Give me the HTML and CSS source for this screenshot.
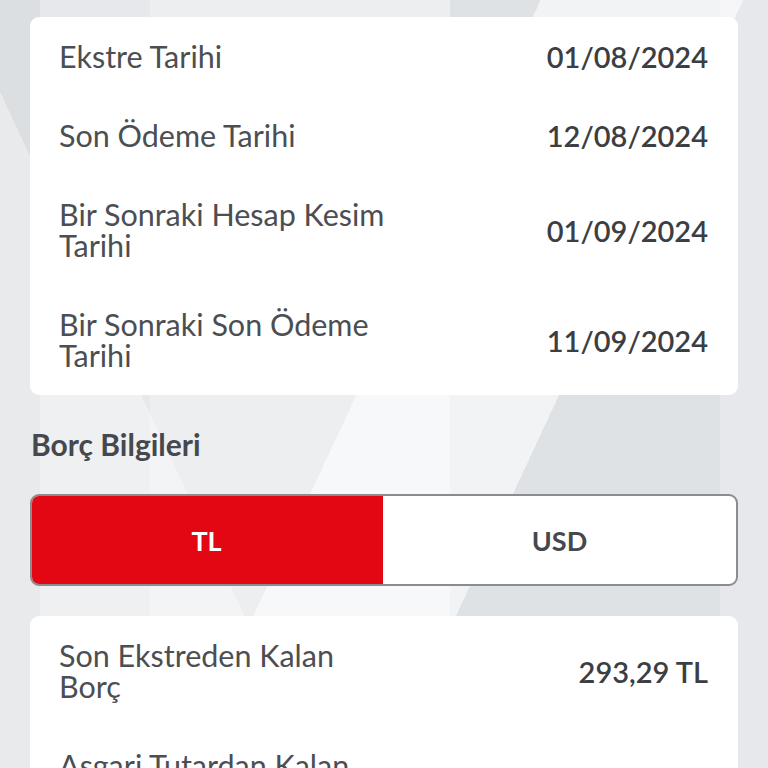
FILE: index.html
```html
<!DOCTYPE html>
<html lang="tr">
<head>
<meta charset="utf-8">
<link rel="stylesheet" href="styles.css">
</head>
<body>
<main class="page">
  <section class="card">
    <div class="row"><div class="label">Ekstre Tarihi</div><div class="value">01/08/2024</div></div>
    <div class="row"><div class="label">Son Ödeme Tarihi</div><div class="value">12/08/2024</div></div>
    <div class="row"><div class="label">Bir Sonraki Hesap Kesim Tarihi</div><div class="value">01/09/2024</div></div>
    <div class="row"><div class="label">Bir Sonraki Son Ödeme Tarihi</div><div class="value">11/09/2024</div></div>
  </section>

  <h2 class="section-title">Borç Bilgileri</h2>

  <div class="toggle">
    <button class="tab tab-active">TL</button>
    <button class="tab">USD</button>
  </div>

  <section class="card">
    <div class="row"><div class="label">Son Ekstreden Kalan Borç</div><div class="value">293,29 TL</div></div>
    <div class="row"><div class="label">Asgari Tutardan Kalan Borç</div><div class="value">0,00 TL</div></div>
  </section>
</main>
</body>
</html>
```

FILE: styles.css
```css
* { box-sizing: border-box; }
html, body { margin: 0; padding: 0; }
body {
  width: 768px;
  height: 768px;
  overflow: hidden;
  font-family: Lato, "Open Sans", sans-serif;
  background:
    linear-gradient(115deg, transparent 0 48%, rgba(255,255,255,0.6) 48% 66%, transparent 66%),
    linear-gradient(65deg, rgba(255,255,255,0.35) 0 28%, transparent 28% 100%),
    linear-gradient(90deg, #dcdfe2 0 40px, #e6e8eb 40px 150px, #eceef0 150px 450px, #dfe2e5 450px 720px, #e6e8eb 720px);
}
.page {
  padding: 17px 30px 0 30px;
  display: flex;
  flex-direction: column;
}
.card {
  background: #ffffff;
  border-radius: 9px;
  padding: 0 30px 0 29px;
}
.row {
  display: flex;
  justify-content: space-between;
  align-items: center;
  padding: 24px 0;
  gap: 20px;
}
.label {
  max-width: 332px;
  font-size: 30.5px;
  line-height: 31px;
  color: #4b4e52;
  font-weight: 400;
}
.value {
  font-size: 29px;
  line-height: 31px;
  color: #3b3e42;
  font-weight: 600;
  text-align: right;
  white-space: nowrap;
}
.section-title {
  margin: 32px 0 0 1px;
  font-size: 30px;
  line-height: 34px;
  font-weight: 700;
  color: #45484c;
}
.toggle {
  margin-top: 33px;
  display: flex;
  height: 92px;
  border-radius: 9px;
  overflow: hidden;
  border: 2px solid #8a8c8f;
  background: #ffffff;
}
.tab {
  flex: 1;
  border: 0;
  background: transparent;
  font-family: inherit;
  font-size: 27px;
  font-weight: 700;
  color: #45484c;
  padding: 0;
}
.tab-active {
  background: #e30613;
  color: #ffffff;
  margin: -2px 0 -2px -2px;
}
.toggle + .card {
  margin-top: 30px;
}
```
